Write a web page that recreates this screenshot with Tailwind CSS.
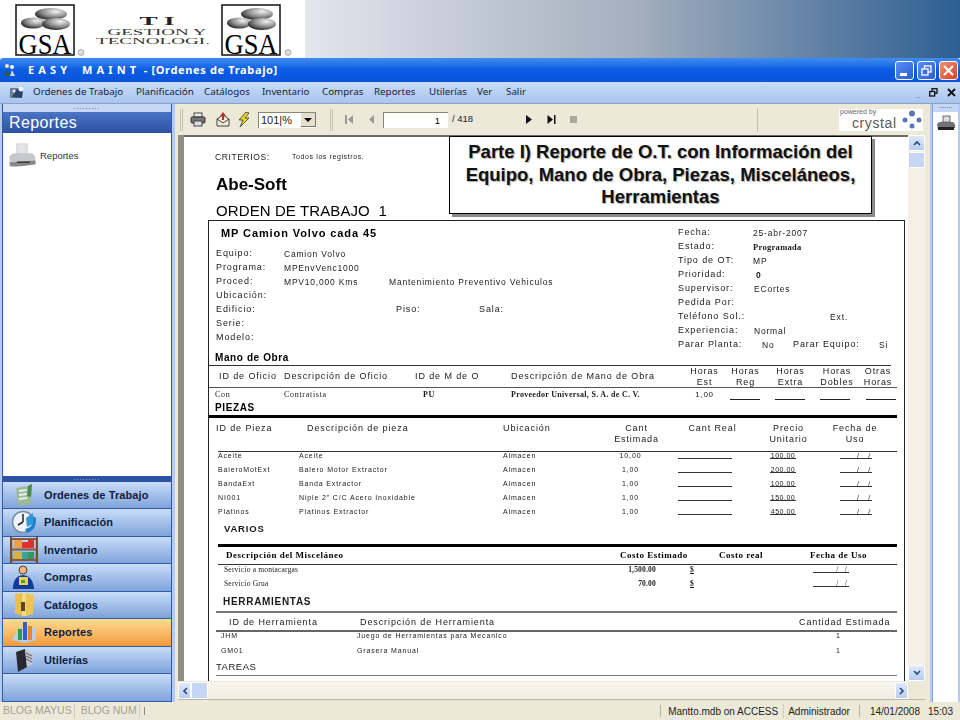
<!DOCTYPE html>
<html lang="es">
<head>
  <meta charset="UTF-8" />
  <title>Easy Maint - Ordenes de Trabajo</title>
  <script src="https://cdn.jsdelivr.net/npm/@tailwindcss/browser@4"></script>
</head>
<body class="bg-white">
<div class="relative w-[960px] h-[720px] overflow-hidden flex flex-col font-['Liberation_Sans',Arial,sans-serif] text-black">

  <!-- Banner -->
  <header class="h-[58px] shrink-0 flex">
    <div class="w-[305px] bg-white pl-[15px] flex items-start">
      <svg width="290" height="58" viewBox="0 0 290 58">
        <defs>
          <radialGradient id="g" cx="0.65" cy="0.3" r="0.8"><stop offset="0" stop-color="#f2f2f2"/><stop offset="0.55" stop-color="#888"/><stop offset="1" stop-color="#111"/></radialGradient>
        </defs>
        <rect x="1" y="5" width="58" height="50" fill="#fff" stroke="#111" stroke-width="1.500"/>
        <ellipse cx="36" cy="14" rx="16" ry="6" fill="url(#g)"/>
        <ellipse cx="18" cy="23" rx="12" ry="5.500" fill="url(#g)"/>
        <ellipse cx="41" cy="24" rx="14" ry="6" fill="url(#g)"/>
        <text x="30" y="53.500" text-anchor="middle" font-family="Liberation Serif" font-size="29" textLength="53" lengthAdjust="spacingAndGlyphs">GSA</text>
        <circle cx="66" cy="52.500" r="3" fill="#ddd" stroke="#777" stroke-width="0.500"/>
        <text x="142" y="25" text-anchor="middle" font-family="Liberation Serif" font-weight="700" font-size="12" fill="#222" textLength="35" lengthAdjust="spacingAndGlyphs">T I</text>
        <text x="142" y="35" text-anchor="middle" font-family="Liberation Serif" font-size="8.500" fill="#333" textLength="99" lengthAdjust="spacingAndGlyphs">GESTION Y</text>
        <text x="138" y="44" text-anchor="middle" font-family="Liberation Serif" font-size="8.500" fill="#333" textLength="114" lengthAdjust="spacingAndGlyphs">TECNOLOGI.</text>
        <rect x="207" y="5" width="58" height="50" fill="#fff" stroke="#111" stroke-width="1.500"/>
        <ellipse cx="242" cy="14" rx="16" ry="6" fill="url(#g)"/>
        <ellipse cx="224" cy="23" rx="12" ry="5.500" fill="url(#g)"/>
        <ellipse cx="247" cy="24" rx="14" ry="6" fill="url(#g)"/>
        <text x="236" y="53.500" text-anchor="middle" font-family="Liberation Serif" font-size="29" textLength="53" lengthAdjust="spacingAndGlyphs">GSA</text>
        <circle cx="273" cy="52.500" r="3" fill="#ddd" stroke="#777" stroke-width="0.500"/>
      </svg>
    </div>
    <div class="flex-1 bg-linear-to-r from-[#e2e6ed] via-[#a5afbe] to-[#2c5f92]"></div>
  </header>

  <!-- Title bar -->
  <div class="h-[24px] shrink-0 flex items-center pl-[3px] pr-[2px] bg-linear-to-b from-[#3f8cf0] via-[#0a5be4] to-[#0a55da] rounded-t-[3px]">
    <svg width="13" height="14" viewBox="0 0 13 14"><circle cx="4" cy="3" r="2" fill="#ffe9a0"/><path d="M1 13 L4 6 L7 13 Z" fill="#2d5f2e"/><circle cx="9" cy="4" r="2" fill="#fff"/><path d="M7 13 L9 7 L12 13 Z" fill="#cfd8e8"/></svg>
    <span class="ml-[12px] text-white font-bold text-[11px] font-['Noto_Sans',sans-serif] whitespace-pre tracking-[0.650px]">E A S Y    M A I N T  - [Ordenes de Trabajo]</span>
    <div class="ml-auto flex gap-[3px]">
      <div class="w-[19px] h-[19px] rounded-[3px] border border-white bg-linear-to-br from-[#5c8df0] to-[#2a5cd8] flex items-end pl-[4px] pb-[3px]"><div class="w-[7px] h-[3px] bg-white"></div></div>
      <div class="w-[19px] h-[19px] rounded-[3px] border border-white bg-linear-to-br from-[#5c8df0] to-[#2a5cd8] flex items-center justify-center">
        <svg width="11" height="11" viewBox="0 0 11 11" fill="none" stroke="#fff" stroke-width="1.300"><rect x="3.500" y="1" width="6.500" height="6"/><rect x="1" y="4" width="6" height="6" fill="#3d6ce0"/></svg>
      </div>
      <div class="w-[19px] h-[19px] rounded-[3px] border border-white bg-linear-to-br from-[#f09070] to-[#d8401c] flex items-center justify-center">
        <svg width="11" height="11" viewBox="0 0 11 11" stroke="#fff" stroke-width="2"><path d="M1 1 L10 10 M10 1 L1 10"/></svg>
      </div>
    </div>
  </div>

  <!-- Menu -->
  <nav class="h-[22px] shrink-0 flex items-center bg-linear-to-b from-[#c9dcf8] to-[#a8c4ee] border-b border-[#8ea3bf] pl-[9px] pr-[4px] text-[9.800px] font-['Noto_Sans',sans-serif] text-[#15233a]">
    <svg width="17" height="16" viewBox="0 0 17 16"><rect x="1" y="3" width="10" height="10" fill="#6d7f95"/><path d="M3 12 L8 4 L14 6 L13 13 Z" fill="#2b4468"/><circle cx="12" cy="4" r="2.500" fill="#eef3fa"/><circle cx="5" cy="6" r="1.500" fill="#dfe8f5"/></svg>
    <div class="ml-[7px] flex">
      <span class="w-[103px]">Ordenes de Trabajo</span><span class="w-[68px]">Planificación</span><span class="w-[58px]">Catálogos</span><span class="w-[60px]">Inventario</span><span class="w-[52px]">Compras</span><span class="w-[55px]">Reportes</span><span class="w-[48px]">Utilerías</span><span class="w-[29px]">Ver</span><span>Salir</span>
    </div>
    <div class="ml-auto flex items-center gap-[9px] text-[#1b1b1b]">
      <span class="text-[#7d8ea8] text-[9px]">_</span>
      <svg width="9" height="9" viewBox="0 0 9 9" fill="none" stroke="#111" stroke-width="1.300"><rect x="3" y="0.700" width="5" height="4.500"/><rect x="0.700" y="3.500" width="5" height="4.500" fill="#b5cdf1"/></svg>
      <svg width="9" height="9" viewBox="0 0 9 9" stroke="#111" stroke-width="1.800"><path d="M1 1 L8 8 M8 1 L1 8"/></svg>
    </div>
  </nav>

  <!-- Body -->
  <div class="flex-1 min-h-0 flex bg-[#b3cbef] pl-[2px] pr-[2px]">

    <!-- Left panel -->
    <aside class="w-[170px] shrink-0 flex flex-col border-x border-b border-[#2f5bab]">
      <div class="h-[8px] bg-[#c4d8f6] text-[7px] leading-[5px] text-center tracking-[1px] text-[#24406f]">.........</div>
      <div class="h-[21px] bg-linear-to-b from-[#4a74c4] to-[#2c52a4] pl-[6px] text-white text-[16px] leading-[21px] tracking-[0.400px]">Reportes</div>
      <div class="flex-1 bg-white pt-[10px] pl-[3px] flex items-start gap-[2px] text-[#333]">
        <svg width="32" height="25" viewBox="0 0 31 27"><rect x="10" y="1" width="11" height="12" fill="#e4e4e8" stroke="#aaa" stroke-width="0.500"/><path d="M2 14 Q5 10 14 11 L26 11 Q30 13 30 18 L30 23 L2 25 Z" fill="#c6c8cc"/><path d="M2 21 L30 19 L30 23 Q16 26 3 25 Z" fill="#85878c"/><rect x="10" y="20" width="14" height="1.500" fill="#333"/></svg>
        <span class="mt-[6px] text-[9.500px]">Reportes</span>
      </div>
      <div class="h-[6px] bg-[#2c52a4] text-[7px] leading-[3px] text-center tracking-[1px] text-[#c9d9f3]">.........</div>

      <div class="h-[27px] flex items-center bg-linear-to-b from-[#c9ddf8] to-[#7fa3da] border-b border-[#2f5bab] text-[11px] font-bold tracking-[0.100px] text-[#0e1c3d]">
        <div class="w-[41px] flex justify-center"><svg width="22" height="24" viewBox="0 0 22 24"><path d="M3 5 L15 3 L19 1 L18 21 L5 23 Z" fill="#9db99b"/><path d="M6 8 L14 7 M6 12 L14 11 M6 16 L14 15" stroke="#e7efe2" stroke-width="2"/><path d="M15 3 L19 1 L18 14 L14 13 Z" fill="#4c8a4d"/></svg></div>
        <span>Ordenes de Trabajo</span>
      </div>
      <div class="h-[27.500px] flex items-center bg-linear-to-b from-[#c9ddf8] to-[#7fa3da] border-b border-[#2f5bab] text-[11px] font-bold tracking-[0.100px] text-[#0e1c3d]">
        <div class="w-[41px] flex justify-center"><svg width="27" height="24" viewBox="0 0 27 24"><circle cx="13" cy="12" r="10.500" fill="#eef3fa" stroke="#7c8ba0" stroke-width="1.500"/><path d="M13 12 L13 4 M13 12 L8 15" stroke="#222" stroke-width="1.500"/><path d="M15 19 Q25 17 23 6 L26 8 Q27 20 17 23 Z" fill="#1f80c8"/><path d="M16 8 L23 3 L23 14 L17 17 Z" fill="#2f97d8"/></svg></div>
        <span>Planificación</span>
      </div>
      <div class="h-[27.500px] flex items-center bg-linear-to-b from-[#c9ddf8] to-[#7fa3da] border-b border-[#2f5bab] text-[11px] font-bold tracking-[0.100px] text-[#0e1c3d]">
        <div class="w-[41px] flex justify-center"><svg width="28" height="26" viewBox="0 0 28 26"><rect x="4" y="3" width="8" height="8" fill="#e8a04a"/><rect x="12" y="5" width="6" height="6" fill="#e03030"/><rect x="18" y="3" width="6" height="8" fill="#d93030"/><rect x="4" y="15" width="8" height="7" fill="#e0a94c"/><rect x="12" y="15" width="6" height="7" fill="#39a49c"/><rect x="18" y="15" width="6" height="7" fill="#2f9a60"/><path d="M1 0 V26 M27 0 V26" stroke="#7a4a2a" stroke-width="2.500"/><path d="M1 12.500 H27 M1 2 H27 M1 23 H27" stroke="#8a5a34" stroke-width="2"/></svg></div>
        <span>Inventario</span>
      </div>
      <div class="h-[27.500px] flex items-center bg-linear-to-b from-[#c9ddf8] to-[#7fa3da] border-b border-[#2f5bab] text-[11px] font-bold tracking-[0.100px] text-[#0e1c3d]">
        <div class="w-[41px] flex justify-center"><svg width="23" height="25" viewBox="0 0 23 25"><circle cx="11" cy="5" r="4" fill="#eab98a" stroke="#5b3a1a"/><path d="M1 24 Q1 11 11 10 Q21 11 22 24 Z" fill="#123a9c"/><rect x="7" y="12" width="9" height="8" fill="#e8d54a"/><rect x="9" y="15" width="4" height="3" fill="#48a048"/></svg></div>
        <span>Compras</span>
      </div>
      <div class="h-[27.500px] flex items-center bg-linear-to-b from-[#c9ddf8] to-[#7fa3da] border-b border-[#2f5bab] text-[11px] font-bold tracking-[0.100px] text-[#0e1c3d]">
        <div class="w-[41px] flex justify-center"><svg width="22" height="25" viewBox="0 0 22 25"><path d="M2 2 L9 1 L9 24 L2 21 Z" fill="#e9bf48"/><path d="M13 1 L21 3 L20 22 L13 24 Z" fill="#eec452"/><rect x="9" y="1" width="4" height="23" fill="#f2d98a"/><rect x="8" y="10" width="4" height="9" fill="#5c4420"/></svg></div>
        <span>Catálogos</span>
      </div>
      <div class="h-[27.500px] flex items-center bg-linear-to-b from-[#fedc90] to-[#ef9a3c] border-b border-[#2f5bab] text-[11px] font-bold tracking-[0.100px] text-[#0e1c3d]">
        <div class="w-[41px] flex justify-center"><svg width="26" height="25" viewBox="0 0 26 25"><path d="M1 20 L8 8 L25 8 L25 20 L14 23 Z" fill="#b6cfe8"/><rect x="7" y="9" width="4" height="11" fill="#2e9b4a"/><rect x="12" y="2" width="4" height="18" fill="#2f62c8"/><rect x="17" y="6" width="4" height="14" fill="#e8862c"/></svg></div>
        <span>Reportes</span>
      </div>
      <div class="h-[27.500px] flex items-center bg-linear-to-b from-[#c9ddf8] to-[#7fa3da] border-b border-[#2f5bab] text-[11px] font-bold tracking-[0.100px] text-[#0e1c3d]">
        <div class="w-[41px] flex justify-center"><svg width="22" height="26" viewBox="0 0 22 26"><path d="M3 5 L12 2 L14 20 L5 25 Z" fill="#2a2a2e"/><path d="M12 2 L20 7 L19 18 L14 20 Z" fill="#c3c8d0"/><path d="M13 6 L19 9 M13 9 L19 12 M13 12 L19 15" stroke="#55585e" stroke-width="1"/></svg></div>
        <span>Utilerías</span>
      </div>
      <div class="h-[27px] bg-linear-to-b from-[#c9ddf8] to-[#7fa3da]"></div>
    </aside>

    <!-- Center -->
    <main class="flex-1 min-w-0 ml-[3px] flex flex-col bg-[#ece9d8]">
      <!-- Toolbar -->
      <div class="h-[31px] shrink-0 flex items-center pl-[5px]">
        <div class="w-[3px] h-[22px] border-x border-[#c4c1ae]"></div>
        <svg class="ml-[7px]" width="16" height="15" viewBox="0 0 16 15"><rect x="4" y="1" width="8" height="4" fill="#eee" stroke="#444"/><rect x="1" y="5" width="14" height="6" rx="1" fill="#777" stroke="#333"/><rect x="4" y="9" width="8" height="5" fill="#ddd" stroke="#444"/></svg>
        <svg class="ml-[9px]" width="16" height="15" viewBox="0 0 16 15"><path d="M2 7 L8 3 L14 7 L14 14 L2 14 Z" fill="#efe9d6" stroke="#444"/><path d="M2 7 L8 11 L14 7" fill="none" stroke="#444"/><path d="M8 0 L11 4 L9 4 L9 8 L7 8 L7 4 L5 4 Z" fill="#c62a2a"/></svg>
        <svg class="ml-[6px]" width="14" height="15" viewBox="0 0 14 15"><path d="M9 0 L2 8 L6 8 L3 15 L12 6 L8 6 L12 1 Z" fill="#e8d820" stroke="#333" stroke-width="0.800"/></svg>
        <div class="ml-[7px] w-[58px] h-[16px] bg-white border-t border-l border-[#8a8778] flex items-center pl-[2px] text-[11px] leading-none text-[#222]">
          <span>101|%</span>
          <div class="ml-auto w-[15px] h-[14px] bg-[#e4e0cc] border-r border-b border-[#777] flex items-center justify-center"><div class="w-0 h-0 border-x-[4px] border-x-transparent border-t-[4px] border-t-black"></div></div>
        </div>
        <div class="ml-[14px] w-[3px] h-[22px] border-x border-[#c4c1ae]"></div>
        <svg class="ml-[12px]" width="9" height="11" viewBox="0 0 9 11" fill="#9a9a90"><rect x="0" y="1" width="2" height="9"/><path d="M8 1 L3 5.500 L8 10 Z"/></svg>
        <svg class="ml-[14px]" width="7" height="11" viewBox="0 0 7 11" fill="#9a9a90"><path d="M6 1 L1 5.500 L6 10 Z"/></svg>
        <div class="ml-[8px] w-[65px] h-[16px] bg-white border-t border-l border-[#8a8778] text-right pr-[8px] text-[9.500px] leading-[15px]">1</div>
        <span class="ml-[4px] w-[25px] text-[9.500px] text-[#222]">/ 418</span>
        <svg class="ml-[48px]" width="8" height="11" viewBox="0 0 8 11"><path d="M1 1 L7 5.500 L1 10 Z" fill="#111"/></svg>
        <svg class="ml-[14px]" width="9" height="11" viewBox="0 0 9 11" fill="#111"><path d="M0.500 1 L6 5.500 L0.500 10 Z"/><rect x="7" y="1" width="1.500" height="9"/></svg>
        <div class="ml-[14px] w-[7px] h-[7px] bg-[#aaa89a]"></div>
        <div class="ml-[180px] w-[2px] h-[24px] border-l border-[#c4c1ae]"></div>
        <div class="ml-auto mr-[7px] w-[84px] h-[22px] bg-white flex items-center relative">
          <span class="absolute left-[1px] top-[-1px] text-[7px] leading-[7px] text-[#666]">powered by</span>
          <span class="absolute left-[13px] top-[9px] text-[14px] leading-[11px] text-[#5a5a5a] tracking-[0.600px]">crystal</span>
          <svg class="absolute right-[1px] top-[1px]" width="20" height="20" viewBox="0 0 20 20" fill="#5a76b8"><circle cx="10" cy="3.500" r="3"/><circle cx="3" cy="10" r="2.500"/><circle cx="17" cy="10" r="2.500"/><circle cx="10" cy="16" r="2.500"/></svg>
        </div>
      </div>

      <!-- Report viewer -->
      <div class="flex-1 min-h-0 flex flex-col pl-[3px] pr-[5px]">
        <div class="flex-1 min-h-0 flex">
          <div class="w-[724px] ml-[6px] shrink-0 bg-white border-t-[2px] border-[#6b6b60] shadow-[-6px_0_0_#8f8f80] overflow-hidden text-[9px] tracking-[0.900px] text-[#1a1a1a] blur-[0.25px]">

            <div class="flex h-[14px] mt-[13px] items-center pl-[31px]">
              <span class="w-[77px] tracking-[0.600px] text-[8.500px]">CRITERIOS:</span><span class="text-[7px] tracking-[0.600px]">Todos los registros.</span>
            </div>
            <div class="h-[20px] mt-[11px] pl-[32px] text-[17px] leading-[20px] font-bold tracking-normal text-black">Abe-Soft</div>
            <div class="h-[18px] mt-[7px] pl-[32px] text-[15px] leading-[18px] tracking-[0.100px] text-black">ORDEN DE TRABAJO&nbsp; 1</div>

            <!-- Work order box -->
            <div class="ml-[24px] w-[697px] h-[500px] border-x border-t border-[#222]">
              <div class="h-[131px] flex">
                <div class="w-[469px] pl-[7px]">
                  <div class="h-[14px] mt-[5px] pl-[5px] flex items-center font-bold text-[11px] tracking-[0.900px] text-black">MP Camion Volvo cada 45</div>
                  <div class="mt-[7px] flex h-[14px] items-center"><span class="w-[68px]">Equipo:</span><span class="text-[8.500px] tracking-[0.800px]">Camion Volvo</span></div>
                  <div class="flex h-[14px] items-center"><span class="w-[68px]">Programa:</span><span class="text-[8.500px] tracking-[0.800px]">MPEnvVenc1000</span></div>
                  <div class="flex h-[14px] items-center"><span class="w-[68px]">Proced:</span><span class="w-[105px] text-[8.500px] tracking-[0.800px]">MPV10,000 Kms</span><span class="text-[8.500px] tracking-[0.800px]">Mantenimiento Preventivo Vehiculos</span></div>
                  <div class="flex h-[14px] items-center"><span>Ubicación:</span></div>
                  <div class="flex h-[14px] items-center"><span class="w-[180px]">Edificio:</span><span class="w-[83px]">Piso:</span><span>Sala:</span></div>
                  <div class="flex h-[14px] items-center"><span>Serie:</span></div>
                  <div class="flex h-[14px] items-center"><span>Modelo:</span></div>
                </div>
                <div class="flex-1 pt-[5px]">
                  <div class="flex h-[14px] items-center"><span class="w-[75px]">Fecha:</span><span class="text-[8.500px] tracking-[0.800px]">25-abr-2007</span></div>
                  <div class="flex h-[14px] items-center"><span class="w-[75px]">Estado:</span><span class="text-[8.500px] tracking-[0.300px] font-['Liberation_Serif',serif] font-bold">Programada</span></div>
                  <div class="flex h-[14px] items-center"><span class="w-[75px]">Tipo de OT:</span><span class="text-[8.500px]">MP</span></div>
                  <div class="flex h-[14px] items-center"><span class="w-[78px]">Prioridad:</span><span class="text-[8.500px] font-bold">0</span></div>
                  <div class="flex h-[14px] items-center"><span class="w-[76px]">Supervisor:</span><span class="text-[8.500px] tracking-[0.800px]">ECortes</span></div>
                  <div class="flex h-[14px] items-center"><span>Pedida Por:</span></div>
                  <div class="flex h-[14px] items-center"><span class="w-[152px]">Teléfono Sol.:</span><span class="text-[8.500px]">Ext.</span></div>
                  <div class="flex h-[14px] items-center"><span class="w-[76px]">Experiencia:</span><span class="text-[8.500px] tracking-[0.800px]">Normal</span></div>
                  <div class="flex h-[14px] items-center"><span class="w-[84px]">Parar Planta:</span><span class="w-[31px] text-[8.500px]">No</span><span class="w-[86px]">Parar Equipo:</span><span class="text-[8.500px]">Si</span></div>
                </div>
              </div>

              <div class="h-[12px] pl-[6px] text-[10px] leading-[12px] font-bold tracking-[0.600px] text-black">Mano de Obra</div>
              <div class="mt-[1px] w-[682px] border-t border-[#333]"></div>
              <div class="h-[22px] w-[688px] flex items-center border-b-[1.500px] border-[#555] pl-[10px]">
                <span class="w-[65px]">ID de Oficio</span><span class="w-[131px]">Descripción de Oficio</span><span class="w-[96px]">ID de M de O</span><span class="w-[174px]">Descripción de Mano de Obra</span>
                <span class="w-[39px] text-center leading-[11px]">Horas<br />Est</span>
                <span class="w-[43px] text-center leading-[11px]">Horas<br />Reg</span>
                <span class="w-[47px] text-center leading-[11px]">Horas<br />Extra</span>
                <span class="w-[46px] text-center leading-[11px]">Horas<br />Dobles</span>
                <span class="w-[36px] text-center leading-[11px]">Otras<br />Horas</span>
              </div>
              <div class="h-[14px] flex items-center pl-[6px] text-[8px] tracking-[0.700px] font-['Liberation_Serif',serif]">
                <span class="w-[69px]">Con</span><span class="w-[139px]">Contratista</span><span class="w-[88px] font-bold">PU</span><span class="w-[174px] font-bold tracking-[0.300px] whitespace-nowrap">Proveedor Universal, S. A. de C. V.</span>
                <span class="w-[39px] text-center font-['Liberation_Sans',sans-serif]">1,00</span>
                <span class="ml-[6px] w-[30px] h-[1px] mt-[8px] bg-[#222]"></span>
                <span class="ml-[15px] w-[30px] h-[1px] mt-[8px] bg-[#222]"></span>
                <span class="ml-[15px] w-[30px] h-[1px] mt-[8px] bg-[#222]"></span>
                <span class="ml-[16px] w-[30px] h-[1px] mt-[8px] bg-[#222]"></span>
              </div>
              <div class="h-[13px] pl-[6px] text-[10px] leading-[12px] font-bold tracking-[0.600px] text-black">PIEZAS</div>
              <div class="w-[688px] border-t-[3px] border-black"></div>
              <div class="h-[33px] w-[688px] flex items-start pt-[5px] pl-[7px] leading-[11px]">
                <span class="w-[91px]">ID de Pieza</span><span class="w-[196px]">Descripción de pieza</span><span class="w-[106px]">Ubicación</span>
                <span class="w-[55px] text-center">Cant<br />Estimada</span>
                <span class="w-[97px] text-center">Cant Real</span>
                <span class="w-[55px] text-center">Precio<br />Unitario</span>
                <span class="w-[78px] text-center">Fecha de<br />Uso</span>
              </div>
              <div class="ml-[9px] w-[679px] border-t border-[#333]"></div>

              <div class="text-[7px] tracking-[0.850px] font-medium">
                <div class="h-[14px] flex pl-[9px] leading-[8px]"><span class="w-[81px]">Aceite</span><span class="w-[204px]">Aceite</span><span class="w-[100px]">Almacen</span><span class="w-[55px] text-center">10,00</span><span class="ml-[20px] w-[54px] h-[7px] border-b border-[#333]"></span><span class="ml-[38px] w-[26px] h-[7px] border-b border-[#333] text-center tracking-[0.500px]">100,00</span><span class="ml-[44px] w-[32px] h-[7px] border-b border-[#333] text-right pr-[1px] whitespace-pre">/   /</span></div>
                <div class="h-[14px] flex pl-[9px] leading-[8px]"><span class="w-[81px]">BaleroMotExt</span><span class="w-[204px]">Balero Motor Extractor</span><span class="w-[100px]">Almacen</span><span class="w-[55px] text-center">1,00</span><span class="ml-[20px] w-[54px] h-[7px] border-b border-[#333]"></span><span class="ml-[38px] w-[26px] h-[7px] border-b border-[#333] text-center tracking-[0.500px]">200,00</span><span class="ml-[44px] w-[32px] h-[7px] border-b border-[#333] text-right pr-[1px] whitespace-pre">/   /</span></div>
                <div class="h-[14px] flex pl-[9px] leading-[8px]"><span class="w-[81px]">BandaExt</span><span class="w-[204px]">Banda Extractor</span><span class="w-[100px]">Almacen</span><span class="w-[55px] text-center">1,00</span><span class="ml-[20px] w-[54px] h-[7px] border-b border-[#333]"></span><span class="ml-[38px] w-[26px] h-[7px] border-b border-[#333] text-center tracking-[0.500px]">100,00</span><span class="ml-[44px] w-[32px] h-[7px] border-b border-[#333] text-right pr-[1px] whitespace-pre">/   /</span></div>
                <div class="h-[14px] flex pl-[9px] leading-[8px]"><span class="w-[81px]">NI001</span><span class="w-[204px]">Niple 2" C/C Acero Inoxidable</span><span class="w-[100px]">Almacen</span><span class="w-[55px] text-center">1,00</span><span class="ml-[20px] w-[54px] h-[7px] border-b border-[#333]"></span><span class="ml-[38px] w-[26px] h-[7px] border-b border-[#333] text-center tracking-[0.500px]">150,00</span><span class="ml-[44px] w-[32px] h-[7px] border-b border-[#333] text-right pr-[1px] whitespace-pre">/   /</span></div>
                <div class="h-[14px] flex pl-[9px] leading-[8px]"><span class="w-[81px]">Platinos</span><span class="w-[204px]">Platinos Extractor</span><span class="w-[100px]">Almacen</span><span class="w-[55px] text-center">1,00</span><span class="ml-[20px] w-[54px] h-[7px] border-b border-[#333]"></span><span class="ml-[38px] w-[26px] h-[7px] border-b border-[#333] text-center tracking-[0.500px]">450,00</span><span class="ml-[44px] w-[32px] h-[7px] border-b border-[#333] text-right pr-[1px] whitespace-pre">/   /</span></div>
              </div>

              <div class="h-[14px] pl-[15px] text-[9.500px] leading-[14px] font-bold tracking-[0.800px]">VARIOS</div>
              <div class="mt-[8px] ml-[9px] w-[679px] border-t-[3px] border-black"></div>
              <div class="h-[17px] w-[688px] flex items-center pl-[17px] font-['Liberation_Serif',serif] font-bold text-[9px] tracking-[0.500px] text-black">
                <span class="w-[394px]">Descripción del Misceláneo</span><span class="w-[99px]">Costo Estimado</span><span class="w-[91px]">Costo real</span><span>Fecha de Uso</span>
              </div>
              <div class="ml-[9px] w-[679px] border-t border-[#333]"></div>
              <div class="font-['Liberation_Serif',serif] text-[7.500px] tracking-[0.200px]">
                <div class="h-[14px] flex pl-[15px] leading-[9px]"><span class="w-[393px]">Servicio a montacargas</span><span class="w-[39px] text-right font-bold">1,500.00</span><span class="ml-[34px] w-[8px] font-bold underline">$</span><span class="ml-[115px] w-[36px] h-[8px] border-b border-[#333] text-right pr-[2px] whitespace-pre">/   /</span></div>
                <div class="h-[14px] flex pl-[15px] leading-[9px]"><span class="w-[393px]">Servicio Grua</span><span class="w-[39px] text-right font-bold">70.00</span><span class="ml-[34px] w-[8px] font-bold underline">$</span><span class="ml-[115px] w-[36px] h-[8px] border-b border-[#333] text-right pr-[2px] whitespace-pre">/   /</span></div>
              </div>
              <div class="mt-[1px] h-[14px] pl-[14px] text-[10px] leading-[15px] font-bold tracking-[0.700px]">HERRAMIENTAS</div>
              <div class="mt-[3px] ml-[7px] w-[681px] border-t-[2px] border-[#777]"></div>
              <div class="h-[17px] w-[688px] flex items-center pl-[20px] pt-[2px]">
                <span class="w-[131px]">ID de Herramienta</span><span class="w-[439px]">Descripción de Herramienta</span><span>Cantidad Estimada</span>
              </div>
              <div class="ml-[7px] w-[681px] border-t-[2px] border-[#666]"></div>
              <div class="text-[7px] tracking-[0.850px] font-medium">
                <div class="h-[15px] flex pl-[12px] leading-[7px]"><span class="w-[136px]">JHM</span><span class="w-[479px]">Juego de Herramientas para Mecanico</span><span>1</span></div>
                <div class="h-[13px] flex pl-[12px] leading-[7px]"><span class="w-[136px]">GM01</span><span class="w-[479px]">Grasera Manual</span><span>1</span></div>
              </div>
              <div class="h-[14px] pl-[7px] text-[9.500px] leading-[14px] tracking-[0.500px]">TAREAS</div>
              <div class="mt-[1px] ml-[7px] w-[681px] border-t-[1.500px] border-[#777]"></div>
            </div>
          </div>

          <!-- Vertical scrollbar -->
          <div class="w-[17px] flex flex-col bg-[#f3f1e6]">
            <div class="h-[16px] bg-linear-to-b from-[#dfe9fb] to-[#b9cdf3] border border-white rounded-[2px] flex items-center justify-center">
              <svg width="8" height="6" viewBox="0 0 8 6" fill="none" stroke="#26487e" stroke-width="1.600"><path d="M1 5 L4 2 L7 5"/></svg>
            </div>
            <div class="h-[16px] mt-[1px] bg-[#c5d6f5] border border-white"></div>
            <div class="flex-1"></div>
            <div class="h-[16px] bg-linear-to-b from-[#dfe9fb] to-[#b9cdf3] border border-white rounded-[2px] flex items-center justify-center">
              <svg width="8" height="6" viewBox="0 0 8 6" fill="none" stroke="#26487e" stroke-width="1.600"><path d="M1 1 L4 4 L7 1"/></svg>
            </div>
          </div>
        </div>

        <!-- Horizontal scrollbar -->
        <div class="h-[17px] mt-[1px] w-[730px] flex bg-linear-to-b from-[#f7f6ef] to-[#f0eee2]">
          <div class="w-[13px] bg-linear-to-b from-[#dfe9fb] to-[#b9cdf3] border border-white flex items-center justify-center">
            <svg width="6" height="8" viewBox="0 0 6 8" fill="none" stroke="#26487e" stroke-width="1.600"><path d="M5 1 L2 4 L5 7"/></svg>
          </div>
          <div class="w-[17px] bg-[#c5d6f5] border border-white"></div>
          <div class="flex-1"></div>
          <div class="w-[13px] bg-linear-to-b from-[#dfe9fb] to-[#b9cdf3] border border-white flex items-center justify-center">
            <svg width="6" height="8" viewBox="0 0 6 8" fill="none" stroke="#26487e" stroke-width="1.600"><path d="M1 1 L4 4 L1 7"/></svg>
          </div>
        </div>
        <div class="h-[3px] border-t border-[#b9b6a4]"></div>
      </div>
    </main>

    <!-- Right panel -->
    <aside class="w-[26px] shrink-0 ml-[2px] bg-white border-l border-[#7fa3da] flex flex-col items-center">
      <div class="w-full h-[8px] bg-[#c4d8f6] text-[7px] leading-[4px] text-center text-[#24406f]">.......</div>
      <svg class="mt-[3px]" width="20" height="18" viewBox="0 0 20 18"><rect x="7" y="1" width="7" height="6" fill="#ddd" stroke="#333" stroke-width="0.700"/><path d="M1 9 Q3 6 8 7 L17 7 Q20 9 19 13 L2 15 Z" fill="#6f7177"/><rect x="2" y="12" width="16" height="3" fill="#222"/></svg>
    </aside>
  </div>

  <!-- Status bar -->
  <footer class="h-[18px] shrink-0 flex items-center bg-[#ece9d8] text-[10px] pl-[3px] pr-[7px] text-[#222]">
    <span class="text-[#a3a196] text-[10.500px]">BLOG MAYUS</span>
    <div class="ml-[2px] w-[1px] h-[14px] bg-[#cfccba]"></div>
    <span class="ml-[6px] text-[#a3a196] text-[10.500px]">BLOG NUM</span>
    <div class="ml-[2px] w-[1px] h-[14px] bg-[#cfccba]"></div>
    <div class="ml-[4px] w-[1px] h-[8px] bg-[#888]"></div>
    <div class="ml-auto w-[1px] h-[12px] bg-[#b5b2a0]"></div>
    <span class="ml-[7px]">Mantto.mdb on ACCESS</span>
    <div class="ml-[5px] w-[1px] h-[14px] bg-[#cfccba]"></div>
    <span class="ml-[4px]">Administrador</span>
    <div class="ml-[9px] w-[1px] h-[12px] bg-[#b5b2a0]"></div>
    <span class="ml-[10px]">14/01/2008</span>
    <span class="ml-[8px]">15:03</span>
  </footer>

  <!-- Callout -->
  <div class="absolute left-[449px] top-[136px] w-[423px] h-[78px] bg-white border border-black shadow-[3px_3px_0_#8a8a8a] flex items-center justify-center text-center text-[18.500px] leading-[22.500px] font-bold text-[#111] [text-shadow:1px_1px_1px_#aaa]">
    <p class="whitespace-nowrap">Parte I) Reporte de O.T. con Información del<br />Equipo, Mano de Obra, Piezas, Misceláneos,<br />Herramientas</p>
  </div>
</div>
</body>
</html>
